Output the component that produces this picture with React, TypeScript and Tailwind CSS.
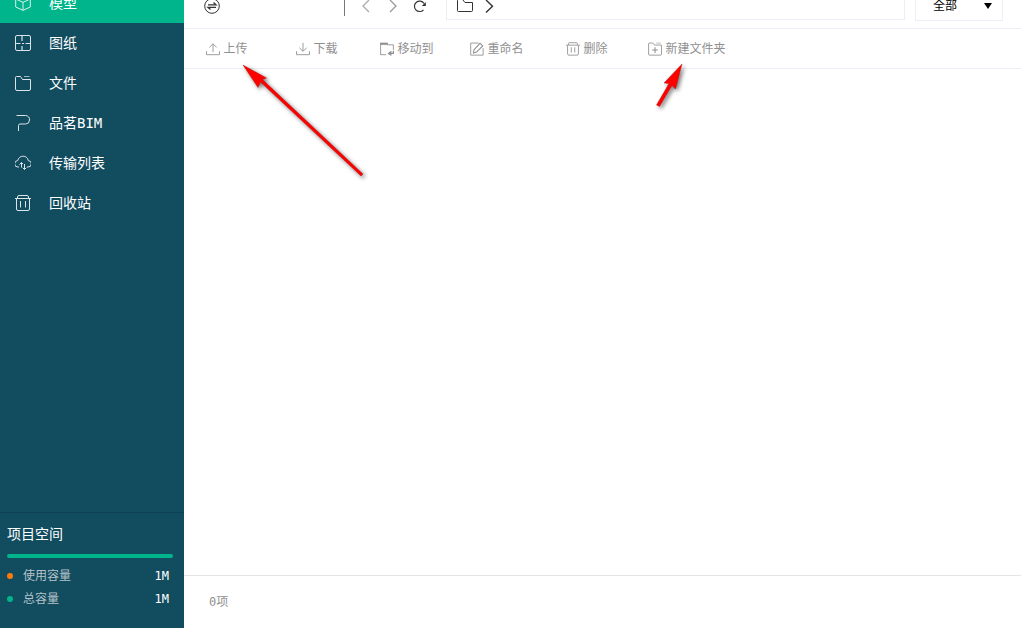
import { useState } from 'react';
import type { ReactNode } from 'react';

type IconProps = { children: ReactNode; className?: string };

function Icon({ children, className = 'w-4 h-4' }: IconProps) {
  return (
    <svg viewBox="0 0 16 16" className={`shrink-0 ${className}`} fill="none" stroke="currentColor" aria-hidden="true">
      {children}
    </svg>
  );
}

const navItems = [
  {
    name: '模型',
    icon: (
      <Icon>
        <path d="M8 .8 15.3 4v8L8 15.3.7 12V4L8 .8ZM.7 4 8 7.3 15.3 4M8 7.3v8" strokeLinejoin="round" />
      </Icon>
    ),
  },
  {
    name: '图纸',
    icon: (
      <Icon>
        <rect x=".5" y=".5" width="15" height="15" rx="1.5" />
        <path d="M1 8.5h4.5M10.5 8.5H15M7 8.5h2" />
        <path d="M7 1v5M7 11v4" strokeWidth="2" opacity=".6" />
      </Icon>
    ),
  },
  {
    name: '文件',
    icon: (
      <Icon>
        <path d="M1.5 1.5h4L7.5 4.5h8v9.5a1.5 1.5 0 0 1-1.5 1.5H2A1.5 1.5 0 0 1 .5 14V2.5a1 1 0 0 1 1-1Z" />
        <path d="M9 1.5h5.5" opacity=".7" />
      </Icon>
    ),
  },
  {
    name: '品茗BIM',
    icon: (
      <Icon>
        <path d="M1.5.5h9a4 4 0 0 1 4 4.5a4 4 0 0 1-4 4H5A1.5 1.5 0 0 0 3.5 10.5V16" />
      </Icon>
    ),
  },
  {
    name: '传输列表',
    icon: (
      <Icon>
        <path d="M4 12H3A3.2 3.2 0 0 1 2.7 5.6C4-.3 12.300-.3 13.300 5.600A3.200 3.200 0 0 1 13 12h-1" />
        <path d="M6.500 12.500V7.500M4.500 9.500l2-2 1.500 1.500M9.500 9v5.500M7.700 12.700l1.800 1.800 1.800-1.800" />
      </Icon>
    ),
  },
  {
    name: '回收站',
    icon: (
      <Icon>
        <path d="M0 3.500h16M2.500 3V2A1.500 1.500 0 0 1 4 .5h8A1.500 1.500 0 0 1 13.500 2v1M1.500 4v10A1.500 1.500 0 0 0 3 15.500h10a1.500 1.500 0 0 0 1.500-1.500V4M5.500 6v6.500M10.500 6v6.500" />
      </Icon>
    ),
  },
];

const actions = [
  {
    name: '上传',
    width: 'w-[86px] mr-0.5',
    icon: (
      <Icon className="w-3.5 h-3.5">
        <path d="M.6 10.5v4h14.8v-4M8 11.5V2M3.8 6.2 8 2l4.2 4.2" />
      </Icon>
    ),
  },
  {
    name: '下载',
    width: 'w-[90px]',
    icon: (
      <Icon className="w-3.5 h-3.5">
        <path d="M.6 10.5v4h14.8v-4M8 1v9.5M3.8 6.5 8 10.7l4.2-4.2" />
      </Icon>
    ),
  },
  {
    name: '移动到',
    width: 'w-[90px]',
    icon: (
      <Icon className="w-3.5 h-3.5">
        <path d="M.7 1v13.500H7M8 3.200h7.300V9" />
        <path d="M.2 2h8.800" strokeWidth="2.500" />
        <path d="M15.300 10v3H12" strokeWidth="1.500" />
        <path d="M8.500 13 13 9.800v6.200Z" fill="currentColor" stroke="none" />
      </Icon>
    ),
  },
  {
    name: '重命名',
    width: 'w-[90px]',
    icon: (
      <Icon className="w-3.5 h-3.5">
        <path d="M10 1.200H.8v13.800h14.200V7" />
        <path d="m4.500 9 7-7.500 3 3-7 7-3.500 1 .5-3.500Z" strokeWidth="1.200" />
      </Icon>
    ),
  },
  {
    name: '删除',
    width: 'w-[90px]',
    icon: (
      <Icon className="w-3.5 h-3.5">
        <path d="M0 3.600h16M3 3.200V2A1 1 0 0 1 4 .8h8A1 1 0 0 1 13 2v1.200M1.800 4v9.500A1.500 1.500 0 0 0 3.300 15h9.400a1.500 1.500 0 0 0 1.500-1.500V4M6 6v6M10 6v6" />
      </Icon>
    ),
  },
  {
    name: '新建文件夹',
    width: 'w-[110px]',
    icon: (
      <Icon className="w-3.5 h-3.5">
        <path d="M1.5 1.2h4L7.5 3.500h7.900V14a1 1 0 0 1-1 1H1.700a1 1 0 0 1-1-1V2a.8.8 0 0 1 .8-.8Z" />
        <path d="M9.500 1.200h5" opacity=".7" />
        <path d="M8 6v6.500M4.800 9.200h6.400" strokeWidth="1.200" />
      </Icon>
    ),
  },
];

const usage = [
  { name: '使用容量', value: '1M', dot: 'bg-[#ff7a0a]' },
  { name: '总容量', value: '1M', dot: 'bg-[#00b58b]' },
];

function Sidebar() {
  const [active, setActive] = useState('模型');

  return (
    <aside className="flex flex-col justify-between w-[184px] shrink-0 bg-[#124c5f] text-white">
      <nav className="-mt-[17px]">
        {navItems.map((item) => (
          <a
            key={item.name}
            href="#"
            onClick={() => setActive(item.name)}
            className={`flex items-center gap-[18px] h-10 pl-[15px] text-sm ${active === item.name ? 'bg-[#00b58b]' : ''}`}
          >
            <span className="opacity-85">{item.icon}</span>
            {item.name}
          </a>
        ))}
      </nav>

      <section className="h-[116px] border-t border-[#0e4153] pl-[7px] pr-[11px] pt-[11px]">
        <h2 className="text-sm leading-5">项目空间</h2>
        <div className="h-1 mt-[10px] mb-1.5 rounded-full bg-[#00b58b]" />
        {usage.map((row) => (
          <div key={row.name} className="flex items-center h-[23px] pr-1 text-xs">
            <span className={`w-1.5 h-1.5 mr-[10px] rounded-full ${row.dot}`} />
            <span className="text-[#b4c3c9]">{row.name}</span>
            <span className="ml-auto">{row.value}</span>
          </div>
        ))}
      </section>
    </aside>
  );
}

function Header() {
  return (
    <header className="flex items-center h-[46px] -mt-[17px] pl-5 pr-[18px] border-b border-[#ebeef5] text-[#333]">
      <button aria-label="切换">
        <Icon>
          <circle cx="8" cy="8" r="7.3" />
          <path d="M4 6.8h8L9.5 4.6M12 9.3H4l2.5 2.2" strokeWidth="1.3" />
        </Icon>
      </button>
      <span className="w-px h-5 ml-[124px] mr-[13px] bg-[#777]" />
      <div className="flex items-center gap-[11px]">
        <button aria-label="后退" className="text-[#aaa]">
          <Icon>
            <path d="M11 2 5 8l6 6" strokeWidth="1.3" />
          </Icon>
        </button>
        <button aria-label="前进" className="text-[#999]">
          <Icon>
            <path d="m5 2 6 6-6 6" strokeWidth="1.3" />
          </Icon>
        </button>
        <button aria-label="刷新">
          <Icon>
            <path d="M11.500 11.800A5.200 5.200 0 1 1 12 5.500" strokeWidth="1.200" />
            <path d="M13.800 4v4H9.800Z" fill="currentColor" stroke="none" />
          </Icon>
        </button>
      </div>
      <div className="flex flex-1 items-center gap-2 h-[29px] ml-[18px] mr-[10px] pl-[10px] border border-[#ebeef5]">
        <Icon>
          <path d="M1.5 1.5h4L8 4.5h7.5v8a1 1 0 0 1-1 1h-13a1 1 0 0 1-1-1v-10a1 1 0 0 1 1-1Z" />
        </Icon>
        <Icon>
          <path d="m5 2 6.5 6.2L5 14.5" strokeWidth="1.4" />
        </Icon>
      </div>
      <label className="relative flex items-center w-[88px] h-[31px] border border-[#ebeef5] text-black">
        <select aria-label="筛选" className="w-full h-full pl-[17px] text-xs appearance-none bg-transparent">
          <option>全部</option>
        </select>
        <svg viewBox="0 0 8 6" className="absolute right-[10px] w-2 h-1.5 pointer-events-none" aria-hidden="true">
          <path d="M0 0h8L4 6Z" />
        </svg>
      </label>
    </header>
  );
}

function Toolbar() {
  return (
    <div className="flex h-10 border-b border-[#ebeef5] text-xs text-[#909090]">
      {actions.map((action) => (
        <button key={action.name} className={`flex items-center justify-center gap-[3px] ${action.width}`}>
          {action.icon}
          {action.name}
        </button>
      ))}
    </div>
  );
}

// Red pointers drawn over the upload and new folder buttons
function Pointers() {
  return (
    <svg
      viewBox="0 0 460 130"
      className="absolute left-[236px] top-[58px] w-[460px] h-[130px] pointer-events-none drop-shadow-[2px_2px_2px_rgba(0,0,0,0.55)]"
      fill="#f00"
      stroke="#b01010"
      strokeWidth=".4"
      aria-hidden="true"
    >
      <path d="M7 7 30.500 20 26.500 21.500 127 116 125 118 24.500 24 22 29.500Z" />
      <path d="M446 6 439.500 31 436 27.500 423.500 48.500 420.500 47 433 25.500 428 25Z" />
    </svg>
  );
}

export default function App() {
  return (
    <div className="relative flex min-h-screen overflow-hidden bg-white font-['DejaVu_Sans_Mono','Noto_Sans_CJK_SC',monospace]">
      <Sidebar />
      <main className="flex flex-col flex-1 min-w-0">
        <Header />
        <Toolbar />
        <div className="flex-1" />
        <footer className="flex items-center h-[53px] pl-[25px] border-t border-[#e4e4e4] text-xs text-[#909090]">0项</footer>
      </main>
      <Pointers />
    </div>
  );
}
